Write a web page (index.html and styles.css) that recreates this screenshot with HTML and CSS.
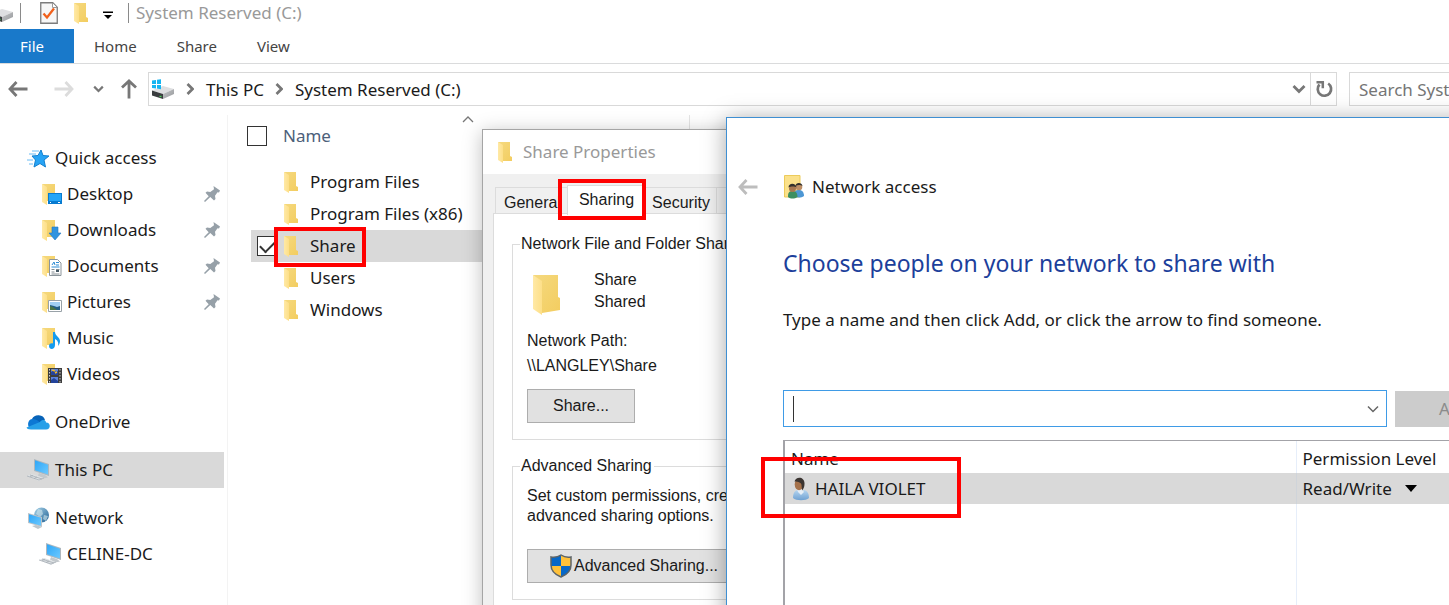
FILE: index.html
```html
<!DOCTYPE html>
<html lang="en">
<head>
<meta charset="utf-8">
<meta name="viewport" content="width=device-width, initial-scale=1">
<title>System Reserved (C:)</title>
<link rel="stylesheet" href="styles.css">
</head>
<body>
<svg class="sprite" width="0" height="0" aria-hidden="true">
  <defs>
    <linearGradient id="gold" x1="0" y1="0" x2="1" y2="1"><stop offset="0" stop-color="#f5d97f"/><stop offset="1" stop-color="#f3cd60"/></linearGradient>
    <linearGradient id="flap" x1="0" y1="0" x2="1" y2="0"><stop offset="0" stop-color="#ffe9a6"/><stop offset="1" stop-color="#fddf88"/></linearGradient>
    <linearGradient id="screen" x1="0" y1="0" x2="1" y2="1"><stop offset="0" stop-color="#2ea6f7"/><stop offset="1" stop-color="#6cc9ff"/></linearGradient>
    <linearGradient id="metal" x1="0" y1="0" x2="1" y2="1"><stop offset="0" stop-color="#c4c6c8"/><stop offset="1" stop-color="#96989b"/></linearGradient>
    <linearGradient id="globe" x1="0" y1="0" x2="1" y2="1"><stop offset="0" stop-color="#a9d4ea"/><stop offset="1" stop-color="#1f5f92"/></linearGradient>
    <linearGradient id="shirt" x1="0" y1="0" x2="0" y2="1"><stop offset="0" stop-color="#b5d5f0"/><stop offset="1" stop-color="#6fa1d2"/></linearGradient>
    <symbol id="folder" viewBox="0 0 14 21"><path d="M0 0h12v14l2 1v4H5z" fill="url(#gold)"/><path d="M0 0l5 3v18l-5-3z" fill="url(#flap)"/></symbol>
    <symbol id="side-folder" viewBox="0 0 24 24"><path d="M4 2h13v17H8z" fill="url(#gold)"/><path d="M4 2l5 3v18l-5-3z" fill="url(#flap)"/></symbol>
    <symbol id="pc" viewBox="0 0 24 24"><path d="M8 1l15 5v12L8 13z" fill="#aeb7be"/><path d="M9 2.200l13 4.600v9.800L9 12.300z" fill="url(#screen)"/><path d="M13 15l6 2 3 2.500-5 1-5-3z" fill="#c3c8cc"/><path d="M1 18l5-2 12 4-5 3z" fill="#dde1e4"/><path d="M1 18l12 4 5-2M4 17l12 4M7 17.500l-3 1M11 19l-3 1.500" stroke="#a3abb1" fill="none" stroke-width=".7"/></symbol>
    <symbol id="pin" viewBox="0 0 16 16"><path d="M9.500 0l6.500 4.500-1 2-1.500-.3-2.500 3.500.5 3.300-1.500 1.500-3.700-3.500L1 16l-1-1 4.700-4.800L1.500 6.800 3 5.500l3.300.5L10 3.200z" fill="#96a0a8"/></symbol>
    <symbol id="drive" viewBox="0 0 24 18"><path d="M1 9.500L12 5l11 3-11 5z" fill="#dedfe1"/><path d="M1 9.500L12 13v5L1 14.500z" fill="#3a3d3f"/><path d="M12 13l11-5v5l-11 5z" fill="url(#metal)"/><path d="M8.500 15.500h2" stroke="#4dd35b" stroke-width="1.300"/></symbol>
    <symbol id="left" viewBox="0 0 20 20"><path d="M8.500 3L2 10l6.500 7M2 10h17.500" fill="none" stroke="currentColor" stroke-width="2.800"/></symbol>
    <symbol id="down" viewBox="0 0 14 10"><path d="M1.500 2L7 7.500 12.500 2" fill="none" stroke="currentColor" stroke-width="2.800"/></symbol>
  </defs>
</svg>

<main class="desktop">
  <section class="explorer" aria-label="File Explorer">
    <header class="titlebar">
      <svg class="tb-drive" viewBox="10 0 14 18" aria-hidden="true"><use href="#drive" width="24" height="18"/></svg>
      <span class="divider"></span>
      <svg class="tb-doc" viewBox="0 0 18 22" aria-hidden="true"><path d="M.75.750h12l4.500 4.500v16H.750z" fill="#f7f7f7" stroke="#7c7c7c" stroke-width="1.300"/><path d="M12.500 1v4.500h4.500" fill="#fff" stroke="#9a9a9a"/><path d="M3.500 11.500l3.500 4 7-9" fill="none" stroke="#f2611c" stroke-width="2.300"/></svg>
      <svg class="folder" aria-hidden="true"><use href="#folder"/></svg>
      <svg class="tb-more" viewBox="0 0 10 8" aria-hidden="true"><path d="M0 .5h10v1.500H0zM1 4h8L5 8z"/></svg>
      <span class="divider"></span>
      <span class="title">System Reserved (C:)</span>
    </header>

    <nav class="ribbon" aria-label="Ribbon">
      <button class="ribbon-tab file">File</button>
      <button class="ribbon-tab">Home</button>
      <button class="ribbon-tab">Share</button>
      <button class="ribbon-tab">View</button>
    </nav>

    <div class="toolbar">
      <button class="nav-btn" aria-label="Back"><svg class="arrow"><use href="#left"/></svg></button>
      <button class="nav-btn forward" aria-label="Forward"><svg class="arrow flip"><use href="#left"/></svg></button>
      <button class="nav-btn recent" aria-label="Recent locations"><svg class="mini-chevron"><use href="#down"/></svg></button>
      <button class="nav-btn up" aria-label="Up"><svg class="arrow turn"><use href="#left"/></svg></button>
      <div class="address">
        <svg class="addr-drive" viewBox="0 0 24 20" aria-hidden="true"><use href="#drive" y="2" width="24" height="18"/><path d="M1 1.500l4-.5v4H1zM6 .800l4-.6V5H6zM1 6h4v3.500L1 9zM6 6h4v4.200l-4-.6z" fill="#16b5f1"/></svg>
        <svg class="crumb-sep" viewBox="0 0 8 12" aria-hidden="true"><path d="M1.500 1L6.500 6l-5 5" fill="none" stroke="#777" stroke-width="2.700"/></svg>
        <a class="crumb" href="#pc-root">This PC</a>
        <svg class="crumb-sep" viewBox="0 0 8 12" aria-hidden="true"><path d="M1.500 1L6.500 6l-5 5" fill="none" stroke="#777" stroke-width="2.700"/></svg>
        <a class="crumb" href="#drive-root">System Reserved (C:)</a>
        <button class="addr-history" aria-label="Previous locations"><svg class="chevron"><use href="#down"/></svg></button>
        <button class="refresh" aria-label="Refresh"><svg class="refresh-icon" viewBox="0 0 18 18"><path d="M13.200 3.500A6.700 6.700 0 1 1 4.500 4.500" fill="none" stroke="#777" stroke-width="2.700"/><path d="M1.500 2.200h6.300v6" fill="none" stroke="#777" stroke-width="2.500"/></svg></button>
      </div>
      <input class="search" type="search" aria-label="Search" placeholder="Search System Reserved (C:)">
    </div>

    <div class="content">
      <nav class="sidebar" aria-label="Folders">
        <a class="item" href="#quick"><svg class="side-icon" viewBox="0 0 24 24"><path d="M15 4l2 5.500 6 .5-5 4 1.500 7-5.500-3.500L8 21l1.500-7L6 10l6-.5z" fill="#27a4f5" stroke="#1380cf"/><path d="M6 5h7M3 8h7M1 14h6M3 18h4" stroke="#6bbcf4" stroke-width="1"/></svg>Quick access</a>
        <a class="item sub" href="#desktop"><svg class="side-icon" viewBox="0 0 24 24"><use href="#side-folder"/><path d="M10 11h14v11H10z" fill="#087bd0"/><path d="M11 12h12v7H11z" fill="#23a5f8"/><path d="M12 20.500h1M20 20.500h2" stroke="#fff"/></svg>Desktop<svg class="pin"><use href="#pin"/></svg></a>
        <a class="item sub" href="#downloads"><svg class="side-icon" viewBox="0 0 24 24"><use href="#side-folder"/><path d="M14 9h6v6h3l-6 7-6-7h3z" fill="#2f93e0" stroke="#2177c0" stroke-width=".6"/></svg>Downloads<svg class="pin"><use href="#pin"/></svg></a>
        <a class="item sub" href="#documents"><svg class="side-icon" viewBox="0 0 24 24"><use href="#side-folder"/><path d="M11.500 5.500h8l3.500 3.500v12.500H11.500z" fill="#fff" stroke="#8c959b"/><path d="M14 11l2-3 1 3M18 8.500h3M18 11h3M13.500 13h8" stroke="#2c8bd3" fill="none"/><path d="M13.500 15.500h3M13.500 18h3M18 15.500h3.500M13.500 20h8" stroke="#828b91"/><path d="M18 16h3v2h-3z" fill="#465965"/></svg>Documents<svg class="pin"><use href="#pin"/></svg></a>
        <a class="item sub" href="#pictures"><svg class="side-icon" viewBox="0 0 24 24"><use href="#side-folder"/><path d="M10.500 10.500h13v11h-13z" fill="#fff" stroke="#99a2a8"/><path d="M12 12h10v8H12z" fill="#a1cff3"/><path d="M12 15l4 1 3 1 3-1v4H12z" fill="#245e84"/><path d="M12 16l3 1 4 3h-7z" fill="#4b7546"/></svg>Pictures<svg class="pin"><use href="#pin"/></svg></a>
        <a class="item sub" href="#music"><svg class="side-icon" viewBox="0 0 24 24"><use href="#side-folder"/><path d="M15 6h2c0 4 5 5 5 9 0 2-1 4-2 5 1-4-1-6-3-7v6c0 5-6 5-6 1 0-3 3-3 4-2.500z" fill="#139bef"/></svg>Music</a>
        <a class="item sub" href="#videos"><svg class="side-icon" viewBox="0 0 24 24"><use href="#side-folder"/><path d="M10 6h14v15H10z" fill="#3d3d3d"/><path d="M13 7h7v6h-7zM13 15h7v6h-7z" fill="#5b83dc"/><path d="M13 10l3-2 2 2 2-1v4h-7zM13 18l3-2 4 3v2h-7z" fill="#23439b"/><path d="M14 8l3 1M17 11l2-1" stroke="#f0b72a" stroke-width="1.500"/><path d="M11.500 7v14M22 7v14" stroke="#ccc" stroke-width="1" stroke-dasharray="1.500 1.500"/></svg>Videos</a>
        <a class="item top" href="#onedrive"><svg class="side-icon" viewBox="0 0 24 24"><path d="M6 9a7 6.500 0 0 1 13 1l-7 6H4z" fill="#0763b8"/><path d="M5 19a5 5.300 0 0 1 1-10c4-.5 6 2 9 4l-3 6z" fill="#0d78d4"/><path d="M14 12c2-3 6-2.500 6 .5 5 0 5 7 0 7H5c-3 0-4-1-4.500-2z" fill="#27a0e8"/></svg>OneDrive</a>
        <a class="item top selected" href="#pc-root" aria-current="page"><svg class="side-icon"><use href="#pc"/></svg>This PC</a>
        <a class="item top" href="#network"><svg class="side-icon" viewBox="0 0 24 24"><circle cx="15.500" cy="9" r="7.500" fill="url(#globe)"/><path d="M12 3l4 1 1 4-3 3-4-3zM18 9l4 1-2 5-3-2z" fill="#d3e9ef" opacity=".6"/><path d="M2 7l14 4v10L2 17z" fill="#bbc3c9"/><path d="M3 8.200l12 3.600v8L3 16.200z" fill="url(#screen)"/><path d="M6 20l4-1 6 2-4 2z" fill="#bec6cb"/></svg>Network</a>
        <a class="item sub" href="#celine"><svg class="side-icon"><use href="#pc"/></svg>CELINE-DC</a>
      </nav>

      <div class="files">
        <div class="column-head">
          <input class="check" type="checkbox" aria-label="Select all">
          <span>Name</span>
          <svg class="sort" viewBox="0 0 12 7" aria-hidden="true"><path d="M1 6l5-5 5 5" fill="none" stroke="#777" stroke-width="1.300"/></svg>
        </div>
        <ul class="file-list">
          <li class="file-row"><svg class="folder"><use href="#folder"/></svg>Program Files</li>
          <li class="file-row"><svg class="folder"><use href="#folder"/></svg>Program Files (x86)</li>
          <li class="file-row chosen"><input class="check" type="checkbox" aria-label="Select Share" checked><svg class="folder"><use href="#folder"/></svg>Share<span class="mark mark-share"></span></li>
          <li class="file-row"><svg class="folder"><use href="#folder"/></svg>Users</li>
          <li class="file-row"><svg class="folder"><use href="#folder"/></svg>Windows</li>
        </ul>
      </div>
    </div>
  </section>

  <section class="window properties" aria-label="Share Properties">
    <header class="prop-title"><svg class="folder"><use href="#folder"/></svg>Share Properties</header>
    <div class="tabs" role="tablist">
      <button class="tab" role="tab">General</button>
      <button class="tab active" role="tab" aria-selected="true">Sharing<span class="mark mark-tab"></span></button>
      <button class="tab" role="tab">Security</button>
      <span class="tab rest"></span>
    </div>
    <div class="panel">
      <fieldset class="group">
        <legend>Network File and Folder Sharing</legend>
        <div class="shared">
          <svg class="big-folder" viewBox="0 0 28 40" aria-hidden="true"><path d="M0 0h25v22l2 1v12L9 38z" fill="url(#gold)"/><path d="M0 0l9 6v34l-9-6z" fill="url(#flap)"/></svg>
          <div>Share<br>Shared</div>
        </div>
        <div class="path">Network Path:<br>\\LANGLEY\Share</div>
        <button class="push">Share...</button>
      </fieldset>
      <fieldset class="group">
        <legend>Advanced Sharing</legend>
        <p class="note">Set custom permissions, create multiple shares, and set other<br>advanced sharing options.</p>
        <button class="push wide"><svg class="shield" viewBox="0 0 22 24" aria-hidden="true"><path d="M11 1C8 3 4 3.500 1 3v8c0 6 5 10 10 12 5-2 10-6 10-12V3c-3 .5-7 0-10-2z" fill="#ffc13b"/><path d="M11 1C8 3 4 3.500 1 3v9h10zM11 12h10c-.5 6-5 9-10 11z" fill="#0868c8"/><path d="M11 1C8 3 4 3.500 1 3v8c0 6 5 10 10 12 5-2 10-6 10-12V3c-3 .5-7 0-10-2z" fill="none" stroke="#5d6468" stroke-width="1.500"/></svg>Advanced Sharing...</button>
      </fieldset>
    </div>
  </section>

  <section class="window wizard" aria-label="Network access">
    <header class="wizard-head">
      <button class="nav-btn back" aria-label="Back"><svg class="arrow"><use href="#left"/></svg></button>
      <svg class="people" viewBox="0 0 20 24" aria-hidden="true"><path d="M.5.500h15.500v21.500H.500z" fill="#fbe18a" stroke="#eccb5b"/><path d="M10 20c0-4 2-5 5-5s5 2 5 6c-3 2-7 2-9 0z" fill="#4d97d4"/><circle cx="15" cy="12" r="3.300" fill="#bd8f66"/><path d="M11.500 11c0-4 6.500-4 7 0-2-1.500-5-1-7 0z" fill="#33302c"/><path d="M4 21c0-4 2-5 4.500-5s5 1 5 6c-3 2-7 2-9.500 0z" fill="#3c8e60"/><circle cx="8.500" cy="13.500" r="3.500" fill="#a87850"/><path d="M4.500 12.500c0-5 7.500-5 8 0-2-1.500-6-1-8 0z" fill="#33302c"/></svg>
      <span>Network access</span>
    </header>
    <div class="wizard-body">
      <h1>Choose people on your network to share with</h1>
      <p class="hint">Type a name and then click Add, or click the arrow to find someone.</p>
      <div class="add-row">
        <div class="combo">
          <span class="caret"></span>
          <input type="text" aria-label="Name to add">
          <button class="combo-btn" aria-label="Find people"><svg viewBox="0 0 12 8"><path d="M1 1.500l5 5 5-5" fill="none" stroke="#666" stroke-width="1.500"/></svg></button>
        </div>
        <button class="add" disabled>Add</button>
      </div>
      <div class="people-list">
        <table>
          <thead><tr><th>Name</th><th class="level">Permission Level</th></tr></thead>
          <tbody>
            <tr class="person">
              <td><div class="who"><svg class="user" viewBox="0 0 18 24" aria-hidden="true"><path d="M1 21c0-6 3-8 5-8l3 2 3-2c4 1 5 4 5 8-3 3-13 3-16 0z" fill="url(#shirt)"/><path d="M5 12h5l2 3-3 3-3-3z" fill="#e6eef6"/><ellipse cx="7" cy="7.500" rx="4.300" ry="5.800" fill="#a5714a"/><path d="M2.500 4.500c1-5.500 10.500-5.500 10 2.500 0 3-1 5-2.500 6.500L9.500 8c0-2-3-3.500-7-3.500z" fill="#3b3531"/></svg>HAILA VIOLET</div></td>
              <td class="level"><div class="choice"><select aria-label="Permission level for HAILA VIOLET"><option>Read/Write</option></select><svg class="drop" viewBox="0 0 12 7" aria-hidden="true"><path d="M0 0h12L6 7z"/></svg></div></td>
            </tr>
            <tr class="blank"><td></td><td class="level"></td></tr>
          </tbody>
        </table>
        <span class="mark mark-person"></span>
      </div>
    </div>
  </section>
</main>
</body>
</html>
```
FILE: styles.css
```css
* { box-sizing: border-box; }

body {
  margin: 0;
  background: #fff;
  color: #1a1a1a;
  font: 17px/24px "Noto Sans", "Open Sans", sans-serif;
}

button, input, select {
  margin: 0;
  padding: 0;
  border: 0;
  border-radius: 0;
  background: none;
  color: inherit;
  font: inherit;
  outline: none;
}

a { color: inherit; text-decoration: none; }
svg { display: block; flex: none; }
.sprite { position: absolute; }

.desktop {
  position: relative;
  height: 100vh;
  overflow: hidden;
}

/* File Explorer */
.explorer { display: flex; flex-direction: column; height: 100%; }

.titlebar { display: flex; align-items: center; height: 29px; padding-bottom: 3px; color: #999; }
.tb-drive { width: 14px; height: 18px; }
.divider { width: 1px; height: 20px; margin-left: 6px; background: #8a8a8a; }
.tb-doc { width: 18px; height: 22px; margin: 0 16px 0 19px; }
.folder { width: 14px; height: 21px; }
.tb-more { width: 10px; height: 8px; margin: 4px 9px 0 15px; }
.title { margin-left: 7px; }

.ribbon { display: flex; height: 35px; border-bottom: 1px solid #dadbdc; font-size: 15px; color: #444; }
.ribbon-tab { padding: 0 20px; }
.ribbon-tab.file { padding: 0 30px 0 20px; background: #1979ca; color: #fff; }

.toolbar { display: flex; align-items: center; padding: 8px 0 0 8px; }
.nav-btn { color: #777; }
.arrow { width: 20px; height: 20px; }
.flip { transform: rotate(180deg); }
.turn { transform: rotate(90deg); }
.forward { margin-left: 26px; color: #dcdcdc; }
.recent { margin-left: 19px; }
.mini-chevron { width: 11px; height: 8px; }
.up { margin: 0 9px 0 15px; }

.address { display: flex; flex: 1; align-items: center; height: 34px; padding-left: 2px; border: 1px solid #d9d9d9; }
.addr-drive { width: 24px; height: 20px; }
.crumb-sep { width: 8px; height: 12px; margin: 0 12px 0 11px; }
.crumb { padding-top: 1px; }
.addr-history { margin: 0 4px 0 auto; color: #777; }
.chevron { width: 14px; height: 10px; }
.refresh { display: flex; align-items: center; justify-content: center; width: 26px; height: 32px; border-left: 1px solid #d9d9d9; }
.refresh-icon { width: 18px; height: 18px; }
.search { width: 240px; height: 34px; margin: 0 -140px 0 12px; padding-left: 9px; border: 1px solid #d9d9d9; }
.search::placeholder { color: #757575; opacity: 1; }

.content { display: flex; flex: 1; margin-top: 9px; }

.sidebar { flex: none; width: 228px; padding: 25px 3px 0 0; border-right: 1px solid #f3f3f3; }
.item { display: flex; align-items: center; gap: 5px; height: 36px; padding-left: 26px; }
.item.sub { padding-left: 38px; }
.item.top { margin-top: 12px; }
.item.selected { background: #d9d9d9; }
.side-icon { width: 24px; height: 24px; }
.pin { width: 16px; height: 16px; margin: 0 4px 0 auto; }

.files { flex: 1; }
.column-head {
  position: relative;
  display: flex;
  align-items: center;
  gap: 16px;
  width: 462px;
  height: 42px;
  padding-left: 19px;
  border-right: 1px solid #e5e5e5;
  color: #4c607a;
}
.sort { position: absolute; top: 1px; left: 234px; width: 12px; height: 7px; }

.check { appearance: none; flex: none; width: 20px; height: 20px; border: 1px solid #333; background: #fff; }
.check:checked::before {
  content: "";
  display: block;
  width: 14px;
  height: 7px;
  margin: 3px 0 0 2px;
  border: solid #333;
  border-width: 0 0 2px 2px;
  transform: rotate(-45deg);
}

.file-list { margin: 9px 0 0 23px; padding: 0; list-style: none; }
.file-row { position: relative; display: flex; align-items: center; gap: 12px; height: 32px; padding-left: 33px; }
.file-row.chosen { padding-left: 6px; background: #d9d9d9; }
.chosen .check { margin-right: -5px; }

/* Red call-out frames */
.mark { position: absolute; border: 4px solid #f00; pointer-events: none; }
.mark-share { top: -3px; left: 23px; width: 92px; height: 40px; }
.mark-tab { inset: -7px -4px -5px -10px; }
.mark-person { top: 16px; left: -24px; width: 200px; height: 61px; }

/* Windows stacked over the explorer */
.window { position: absolute; bottom: -80px; }

.properties {
  top: 129px;
  left: 482px;
  width: 540px;
  border: 1px solid #a5a5a5;
  background: #f0f0f0;
  box-shadow: 0 3px 18px rgba(0, 0, 0, .25);
  font: 16px/20px "Liberation Sans", Arial, sans-serif;
}
.prop-title { display: flex; align-items: center; gap: 11px; height: 44px; padding-left: 15px; background: #fff; color: #999; font: 17px/24px "Noto Sans", "Open Sans", sans-serif; }

.tabs { display: flex; align-items: flex-end; height: 40px; margin: 0 12px; }
.tab { position: relative; height: 27px; padding: 3px 6px 0 8px; border: solid #dcdcdc; border-width: 1px 0 0 1px; }
.tab.active { z-index: 1; height: 30px; margin-bottom: -1px; padding: 0 8px 1px 11px; border-width: 1px 1px 0; background: #fff; }
.tab.rest { flex: 1; }
.panel { margin: -1px 9px 0 10px; padding: 20px 18px; border: 1px solid #dcdcdc; background: #fff; }

.group { margin: 0 0 16px; padding: 0 15px 16px 14px; border: 1px solid #dcdcdc; }
.group legend { margin-left: -7px; padding: 0 2px 0 1px; }
.shared { display: flex; gap: 33px; padding: 15px 0 0 6px; line-height: 22px; }
.big-folder { width: 28px; height: 40px; margin-top: 6px; }
.path { margin: 13px 0 11px; line-height: 25px; }
.push { display: flex; align-items: center; justify-content: center; width: 108px; height: 34px; border: 1px solid #adadad; background: #e1e1e1; }
.push.wide { width: 214px; gap: 2px; }
.shield { width: 22px; height: 24px; }
.note { margin: 10px 0 23px; }

.wizard {
  top: 117px;
  left: 726px;
  right: -124px;
  display: flex;
  flex-direction: column;
  border: 1px solid #3f8fd2;
  background: #fff;
  box-shadow: 0 3px 22px rgba(0, 0, 0, .35);
}
.wizard-head { display: flex; align-items: center; height: 28px; margin: 55px 0 46px; padding-left: 11px; }
.back { color: #bdbdbd; }
.people { width: 20px; height: 24px; margin: 0 8px 0 26px; }
.wizard-body { display: flex; flex: 1; flex-direction: column; padding: 0 57px 0 56px; }
.wizard h1 { margin: 0; color: #1c3f9b; font-size: 23px; font-weight: 400; line-height: 32px; }
.hint { margin: 29px 0 58px; }

.add-row { display: flex; gap: 8px; }
.combo { display: flex; flex: 1; align-items: center; height: 37px; padding: 0 7px 0 9px; border: 1px solid #3f9be6; }
.caret { width: 1px; height: 26px; background: #333; }
.combo input { flex: 1; height: 100%; }
.combo-btn svg { width: 12px; height: 8px; }
.add { width: 120px; margin-top: 1px; background: #ccc; color: #8b8b8b; }

.people-list { position: relative; display: flex; flex: 1; margin-top: 13px; border: 1px solid #a3a3a8; border-width: 1px 1px 0 2px; }
.people-list table { width: 100%; height: 100%; border-collapse: collapse; }
.people-list th { height: 32px; padding: 4px 0 0 6px; font-weight: 400; text-align: left; }
.people-list td { padding: 0 0 0 7px; }
.people-list .level { width: 218px; padding-left: 6px; border-left: 1px solid #e6eefa; }
.person { height: 31px; background: #d9d9d9; }
.person .level { border-left-color: #cfd4da; }
.who { display: flex; align-items: center; gap: 5px; }
.user { width: 18px; height: 24px; }
.choice { display: flex; align-items: center; gap: 12px; }
.choice select { appearance: none; }
.drop { width: 12px; height: 7px; }
```
